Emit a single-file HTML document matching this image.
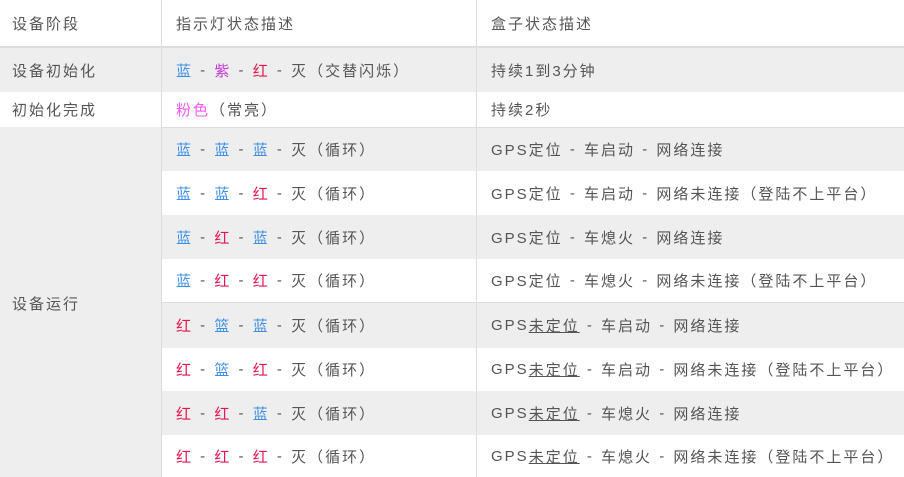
<!DOCTYPE html><html><head><meta charset="utf-8"><style>
body{margin:0;width:904px;height:477px;overflow:hidden;background:#fff;font-family:"Liberation Sans","Noto Sans CJK SC",sans-serif;font-size:15px;color:#555;letter-spacing:2px}
.r{position:absolute;left:0;width:904px}
.c{position:absolute;top:0;bottom:0;display:flex;align-items:center;white-space:pre;box-sizing:border-box}
.a{left:0;width:161px;padding-left:12px}
.b{left:161px;width:315px;padding-left:14px;border-left:1px solid #ddd}
.d{left:476px;width:428px;padding-left:14px;border-left:1px solid #ddd}
.g{background:#eee}
.B{color:#3d8fe8}.R{color:#e3174d}.P{color:#c33bd6}.K{color:#f35cf0}
i{font-style:normal;margin:0 1px}
u{text-decoration-color:#555}
</style></head><body>
<div class="r" style="top:0;border-bottom:2px solid #ddd;box-sizing:border-box;height:48px"><div class="c a">设备阶段</div><div class="c b">指示灯状态描述</div><div class="c d">盒子状态描述</div></div>
<div class="r g" style="top:48px;height:44px"><div class="c a">设备初始化</div><div class="c b"><span class="B">蓝</span><i> - </i><span class="P">紫</span><i> - </i><span class="R">红</span><i> - </i>灭（交替闪烁）</div><div class="c d">持续1到3分钟</div></div>
<div class="r" style="top:92px;height:35px"><div class="c a">初始化完成</div><div class="c b"><span class="K">粉色</span>（常亮）</div><div class="c d">持续2秒</div></div>
<div style="position:absolute;left:0;top:127px;width:161px;height:350px;background:#eee;display:flex;align-items:center;padding-left:12px;box-sizing:border-box;padding-top:2px">设备运行</div>
<div style="position:absolute;left:161px;top:127px;width:743px;height:350px;border-top:1px solid #ddd;box-sizing:border-box"></div>
<div class="r g" style="top:128px;height:43px;left:161px;width:743px"><div class="c b" style="left:0"><span class="B">蓝</span><i> - </i><span class="B">蓝</span><i> - </i><span class="B">蓝</span><i> - </i>灭（循环）</div><div class="c d" style="left:315px">GPS定位<i> - </i>车启动<i> - </i>网络连接</div></div>
<div class="r" style="top:171px;height:44px;left:161px;width:743px"><div class="c b" style="left:0"><span class="B">蓝</span><i> - </i><span class="B">蓝</span><i> - </i><span class="R">红</span><i> - </i>灭（循环）</div><div class="c d" style="left:315px">GPS定位<i> - </i>车启动<i> - </i>网络未连接（登陆不上平台）</div></div>
<div class="r g" style="top:215px;height:44px;left:161px;width:743px"><div class="c b" style="left:0"><span class="B">蓝</span><i> - </i><span class="R">红</span><i> - </i><span class="B">蓝</span><i> - </i>灭（循环）</div><div class="c d" style="left:315px">GPS定位<i> - </i>车熄火<i> - </i>网络连接</div></div>
<div class="r" style="top:259px;height:44px;left:161px;width:743px;border-bottom:1px solid #ddd;box-sizing:border-box"><div class="c b" style="left:0"><span class="B">蓝</span><i> - </i><span class="R">红</span><i> - </i><span class="R">红</span><i> - </i>灭（循环）</div><div class="c d" style="left:315px">GPS定位<i> - </i>车熄火<i> - </i>网络未连接（登陆不上平台）</div></div>
<div class="r g" style="top:303px;height:45px;left:161px;width:743px"><div class="c b" style="left:0"><span class="R">红</span><i> - </i><span class="B">篮</span><i> - </i><span class="B">蓝</span><i> - </i>灭（循环）</div><div class="c d" style="left:315px">GPS<u>未定位</u><i> - </i>车启动<i> - </i>网络连接</div></div>
<div class="r" style="top:348px;height:43px;left:161px;width:743px"><div class="c b" style="left:0"><span class="R">红</span><i> - </i><span class="B">篮</span><i> - </i><span class="R">红</span><i> - </i>灭（循环）</div><div class="c d" style="left:315px">GPS<u>未定位</u><i> - </i>车启动<i> - </i>网络未连接（登陆不上平台）</div></div>
<div class="r g" style="top:391px;height:44px;left:161px;width:743px"><div class="c b" style="left:0"><span class="R">红</span><i> - </i><span class="R">红</span><i> - </i><span class="B">蓝</span><i> - </i>灭（循环）</div><div class="c d" style="left:315px">GPS<u>未定位</u><i> - </i>车熄火<i> - </i>网络连接</div></div>
<div class="r" style="top:435px;height:42px;left:161px;width:743px"><div class="c b" style="left:0"><span class="R">红</span><i> - </i><span class="R">红</span><i> - </i><span class="R">红</span><i> - </i>灭（循环）</div><div class="c d" style="left:315px">GPS<u>未定位</u><i> - </i>车熄火<i> - </i>网络未连接（登陆不上平台）</div></div>
</body></html>
